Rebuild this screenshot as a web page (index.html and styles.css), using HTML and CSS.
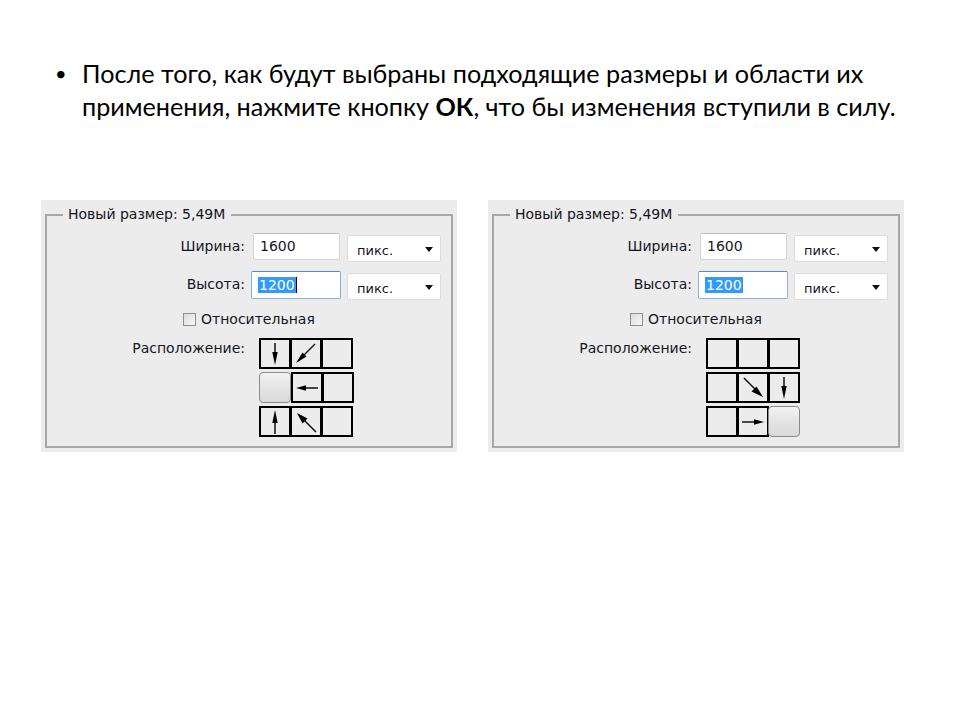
FILE: index.html
```html
<!DOCTYPE html>
<html lang="ru">
<head>
<meta charset="utf-8">
<link rel="stylesheet" href="styles.css">
</head>
<body>
<div class="slide">
  <div class="bullet-item">
    <span class="bullet">•</span>
    <p class="bullet-text"><span>После того, как будут выбраны подходящие размеры и области их</span> <span>применения, нажмите кнопку</span> <b>ОК</b><span>, что бы изменения вступили в силу.</span></p>
  </div>

  <div class="panels">
    <div class="panel">
      <fieldset class="group">
        <legend class="legend">Новый размер: 5,49M</legend>
        <div class="form">
          <span class="label">Ширина:</span>
          <div class="controls">
            <span class="input">1600</span>
            <span class="select">пикс.<span class="caret"></span></span>
          </div>
          <span class="label">Высота:</span>
          <div class="controls">
            <span class="input focused"><span class="sel">1200</span><span class="cursor"></span></span>
            <span class="select">пикс.<span class="caret"></span></span>
          </div>
          <span class="label"></span>
          <div class="check-row"><span class="checkbox"></span><span>Относительная</span></div>
          <span class="label place">Расположение:</span>
          <div class="anchor">
            <div class="arow">
              <span class="cell"><svg viewBox="0 0 28 27"><line x1="14" y1="3" x2="14" y2="18"/><polygon points="11.3,12 16.7,12 14,25"/></svg></span>
              <span class="cell"><svg viewBox="0 0 28 27"><line x1="23" y1="4" x2="10" y2="17"/><polygon points="4,23 10.5,12.5 14.5,16.5"/></svg></span>
              <span class="cell"></span>
            </div>
            <div class="arow">
              <span class="cell active"></span>
              <span class="cell"><svg viewBox="0 0 28 27"><line x1="25" y1="14" x2="9" y2="14"/><polygon points="3,14 13,11.3 13,16.7"/></svg></span>
              <span class="cell"></span>
            </div>
            <div class="arow">
              <span class="cell"><svg viewBox="0 0 28 27"><line x1="14" y1="26" x2="14" y2="9"/><polygon points="11.3,15 16.7,15 14,2"/></svg></span>
              <span class="cell"><svg viewBox="0 0 28 27"><line x1="24" y1="24" x2="10" y2="10"/><polygon points="5,5 15.5,10.5 10.5,15.5"/></svg></span>
              <span class="cell"></span>
            </div>
          </div>
        </div>
      </fieldset>
    </div>

    <div class="panel">
      <fieldset class="group">
        <legend class="legend">Новый размер: 5,49M</legend>
        <div class="form">
          <span class="label">Ширина:</span>
          <div class="controls">
            <span class="input">1600</span>
            <span class="select">пикс.<span class="caret"></span></span>
          </div>
          <span class="label">Высота:</span>
          <div class="controls">
            <span class="input focused"><span class="sel">1200</span></span>
            <span class="select">пикс.<span class="caret"></span></span>
          </div>
          <span class="label"></span>
          <div class="check-row"><span class="checkbox"></span><span>Относительная</span></div>
          <span class="label place">Расположение:</span>
          <div class="anchor">
            <div class="arow">
              <span class="cell"></span>
              <span class="cell"></span>
              <span class="cell"></span>
            </div>
            <div class="arow">
              <span class="cell"></span>
              <span class="cell"><svg viewBox="0 0 28 27"><line x1="5" y1="4" x2="18" y2="17"/><polygon points="24,23 12.5,17.5 17.5,12.5"/></svg></span>
              <span class="cell"><svg viewBox="0 0 28 27"><line x1="14" y1="3" x2="14" y2="18"/><polygon points="11.3,12 16.7,12 14,25"/></svg></span>
            </div>
            <div class="arow">
              <span class="cell"></span>
              <span class="cell"><svg viewBox="0 0 28 27"><line x1="3" y1="14" x2="19" y2="14"/><polygon points="25,14 15,11.3 15,16.7"/></svg></span>
              <span class="cell active"></span>
            </div>
          </div>
        </div>
      </fieldset>
    </div>
  </div>
</div>
</body>
</html>
```

FILE: styles.css
```css
html, body {
  margin: 0;
  padding: 0;
  background: #ffffff;
}

.slide {
  width: 960px;
  height: 720px;
  overflow: hidden;
}

.bullet-item {
  display: flex;
  padding: 57px 0 0 55px;
  font-family: "Lato", "Open Sans", sans-serif;
  font-size: 25.2px;
  line-height: 33px;
  color: #000;
}

.bullet {
  width: 27px;
  flex: none;
  font-size: 20px;
}

.bullet-text {
  margin: 0;
  width: 860px;
}

.bullet-text b {
  font-weight: 700;
}

.panels {
  display: flex;
  gap: 31px;
  margin: 77px 0 0 41px;
}

.panel {
  width: 416px;
  height: 252px;
  background: #ececec;
  box-sizing: border-box;
  padding: 7px 4px 4px 4px;
  font-family: "DejaVu Sans", "Liberation Sans", sans-serif;
  font-size: 14px;
  color: #15151f;
}

.group {
  margin: 0;
  height: 100%;
  box-sizing: border-box;
  border: 2px solid #a7a7a7;
  border-radius: 0;
  padding: 0;
}

.legend {
  margin-left: 16px;
  padding: 0 6px 0 5px;
  line-height: 15px;
}

.form {
  display: grid;
  grid-template-columns: 198px auto;
  column-gap: 6px;
  align-items: start;
  margin-top: 11px;
}

.label {
  text-align: right;
  line-height: 27px;
  height: 27px;
}

.controls {
  display: flex;
  align-items: flex-start;
  gap: 7px;
  height: 38px;
}

.input {
  width: 87px;
  height: 27px;
  margin-left: 2px;
  box-sizing: border-box;
  background: #fff;
  border: 1px solid #d4d4d4;
  border-top-color: #bcbcbc;
  border-radius: 2px;
  padding: 5px 0 0 6px;
  line-height: 15px;
  display: flex;
  align-items: flex-start;
}

.input.focused {
  width: 90px;
  height: 28px;
  margin-left: 0;
  margin-right: -1px;
  border: 1px solid #8ab0d8;
  border-top-color: #5d88b8;
  padding: 5px 0 0 6px;
}

.sel {
  background: #3399ff;
  color: #fff;
  padding: 0 1px;
  line-height: 16px;
}

.cursor {
  width: 1px;
  height: 16px;
  background: #000;
}

.select {
  width: 94px;
  height: 27px;
  box-sizing: border-box;
  margin-top: 2px;
  background: #fff;
  border: 1px solid #dcdcdc;
  border-radius: 2px;
  padding: 7px 0 0 9px;
  line-height: 15px;
  position: relative;
  font-size: 13px;
}

.caret {
  position: absolute;
  right: 7px;
  top: 11px;
  width: 0;
  height: 0;
  border-left: 4px solid transparent;
  border-right: 4px solid transparent;
  border-top: 5px solid #111;
}

.check-row {
  display: flex;
  align-items: center;
  gap: 5px;
  margin-left: -68px;
  height: 24px;
  margin-top: -2px;
}

.checkbox {
  width: 13px;
  height: 13px;
  box-sizing: border-box;
  border: 1px solid #8e8f8f;
  background: linear-gradient(135deg, #dcdcdc, #f7f7f7);
}

.label.place {
  line-height: 17px;
  margin-top: 4px;
}

.anchor {
  display: flex;
  flex-direction: column;
  gap: 3px;
  margin-left: 8px;
  margin-top: 2px;
}

.arow {
  display: flex;
  height: 31px;
}

.cell {
  width: 32px;
  height: 31px;
  box-sizing: border-box;
  border: 2px solid #000;
  margin-right: -1px;
  background: #ececec;
  display: block;
}

.cell svg {
  display: block;
  width: 28px;
  height: 27px;
}

.cell svg line {
  stroke: #111;
  stroke-width: 1.5;
}

.cell svg polygon {
  fill: #000;
}

.cell.active {
  border: 1px solid #8a8a8a;
  border-radius: 4px;
  background: linear-gradient(#f2f2f2, #e4e4e4 50%, #d9d9d9);
  margin-right: 0;
}
```
